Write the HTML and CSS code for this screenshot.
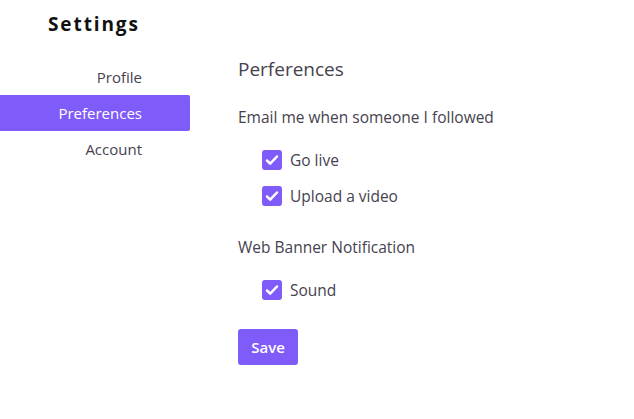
FILE: index.html
```html
<!DOCTYPE html>
<html>
<head>
<meta charset="utf-8">
<link rel="stylesheet" href="styles.css">
</head>
<body>
<div class="layout">
  <aside class="sidebar">
    <h1 class="title">Settings</h1>
    <nav class="nav">
      <a class="nav-item">Profile</a>
      <a class="nav-item active">Preferences</a>
      <a class="nav-item">Account</a>
    </nav>
  </aside>
  <main class="content">
    <h2 class="heading">Perferences</h2>
    <div class="group">
      <div class="group-label">Email me when someone I followed</div>
      <label class="check"><span class="box"><svg viewBox="0 0 20 20" width="20" height="20"><path d="M5 10.5l3.2 3.2L15 6.5" fill="none" stroke="#fff" stroke-width="2.5" stroke-linecap="round" stroke-linejoin="round"/></svg></span>Go live</label>
      <label class="check"><span class="box"><svg viewBox="0 0 20 20" width="20" height="20"><path d="M5 10.5l3.2 3.2L15 6.5" fill="none" stroke="#fff" stroke-width="2.5" stroke-linecap="round" stroke-linejoin="round"/></svg></span>Upload a video</label>
    </div>
    <div class="group">
      <div class="group-label">Web Banner Notification</div>
      <label class="check"><span class="box"><svg viewBox="0 0 20 20" width="20" height="20"><path d="M5 10.5l3.2 3.2L15 6.5" fill="none" stroke="#fff" stroke-width="2.5" stroke-linecap="round" stroke-linejoin="round"/></svg></span>Sound</label>
    </div>
    <button class="save">Save</button>
  </main>
</div>
</body>
</html>
```
FILE: styles.css
```css
* { box-sizing: border-box; }
body {
  margin: 0;
  font-family: "Open Sans", "Noto Sans", sans-serif;
  color: #46424f;
  background: #fff;
}
.layout {
  display: flex;
}
.sidebar {
  width: 190px;
  flex-shrink: 0;
}
.title {
  margin: 0;
  padding: 11px 0 0 48px;
  height: 59px;
  font-size: 19px;
  font-weight: 700;
  letter-spacing: 1.9px;
  color: #111;
  line-height: 26px;
}
.nav {
  display: flex;
  flex-direction: column;
}
.nav-item {
  height: 36px;
  line-height: 36px;
  text-align: right;
  padding-right: 48px;
  font-size: 15px;
  color: #46424f;
  border-radius: 0 2px 2px 0;
}
.nav-item.active {
  background: #7f5cf9;
  color: #fff;
}
.content {
  padding: 56px 0 0 48px;
}
.heading {
  margin: 0 0 25px;
  font-size: 19px;
  font-weight: 400;
  line-height: 26px;
}
.group {
  display: flex;
  flex-direction: column;
  gap: 16px;
  margin-bottom: 31px;
}
.group-label {
  font-size: 15.5px;
  line-height: 20px;
  margin-bottom: 7px;
}
.check {
  display: flex;
  align-items: center;
  gap: 8px;
  margin-left: 24px;
  height: 20px;
  font-size: 15.5px;
}
.box {
  width: 20px;
  height: 20px;
  border-radius: 3px;
  background: #7f5cf9;
  display: flex;
}
.save {
  display: block;
  width: 60px;
  height: 36px;
  border: 0;
  border-radius: 3px;
  background: #7f5cf9;
  color: #fff;
  font-family: inherit;
  font-size: 15px;
  font-weight: 600;
  padding: 0;
  margin-top: -2px;
}
```
